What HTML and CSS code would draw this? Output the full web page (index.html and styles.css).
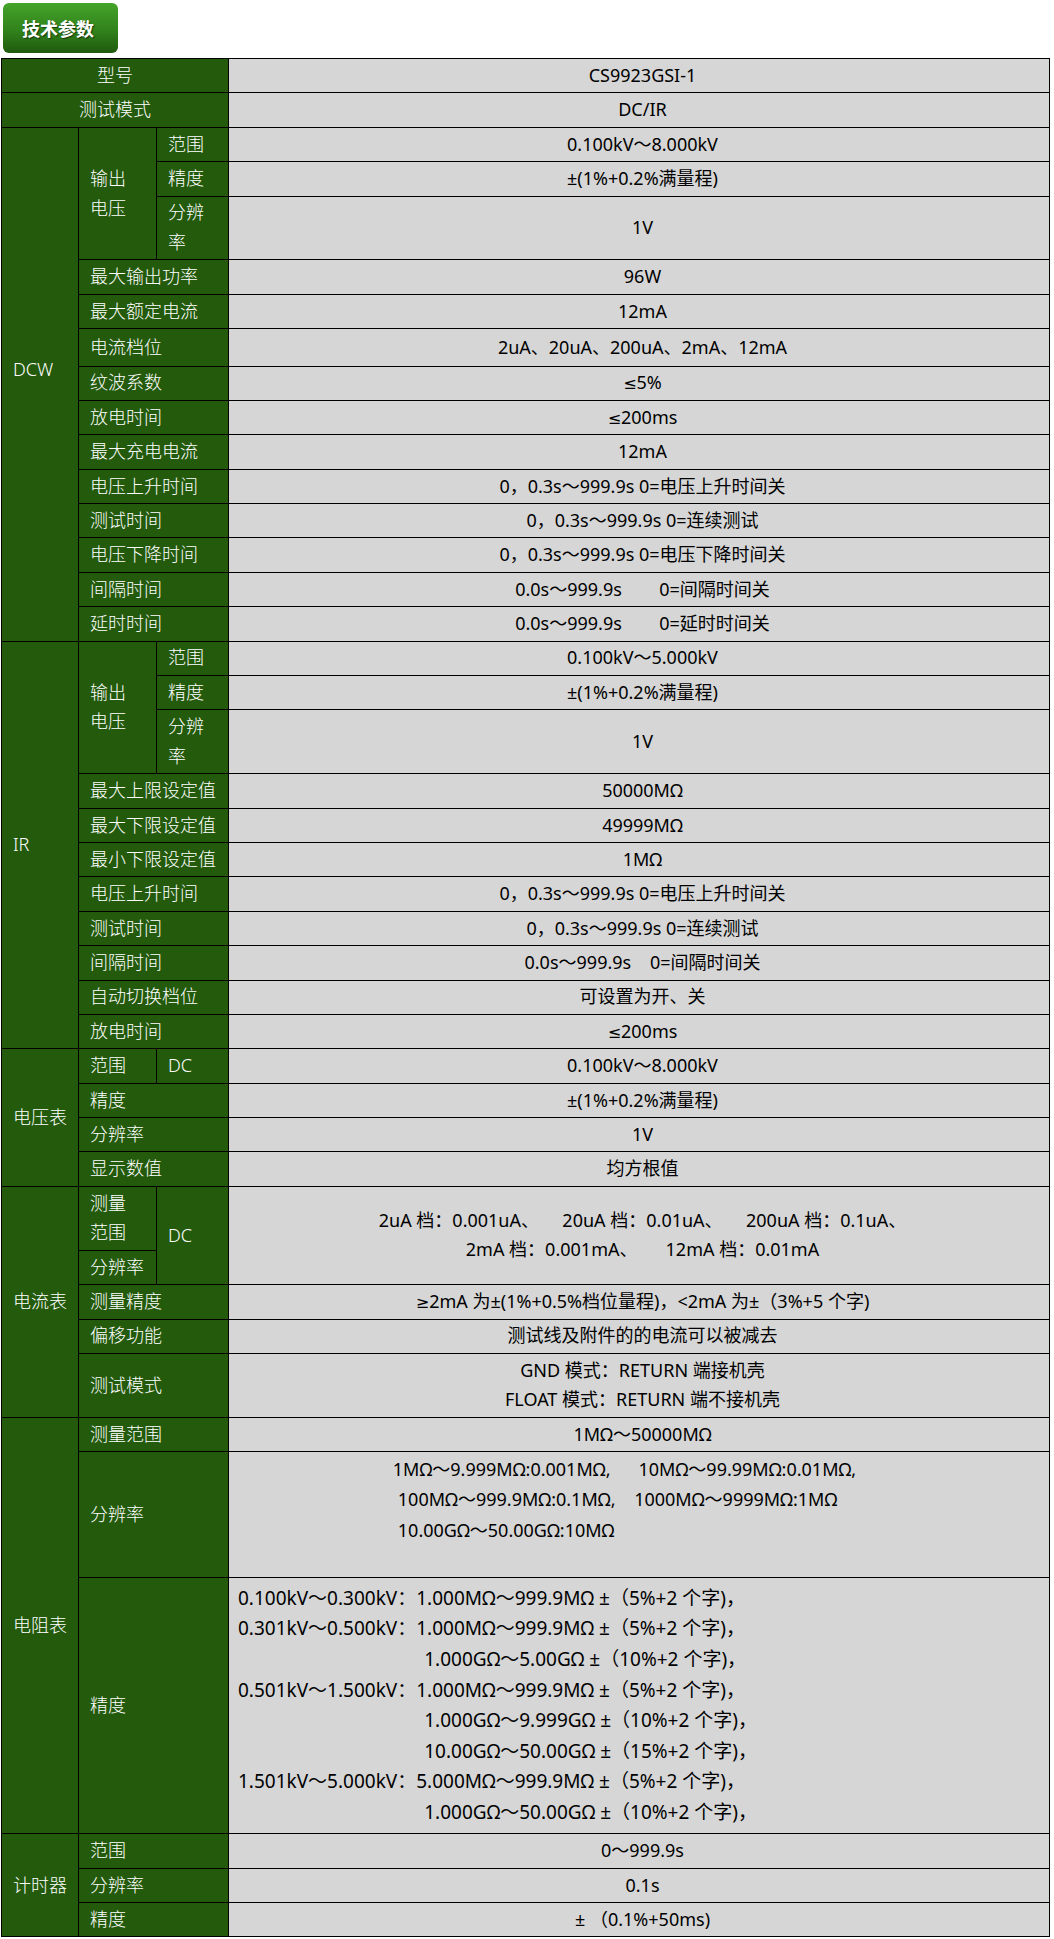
FILE: index.html
```html
<!DOCTYPE html>
<html lang="zh-CN">
<head>
<meta charset="utf-8">
<title>技术参数</title>
<link rel="stylesheet" href="styles.css">
</head>
<body>
<div class="page">
  <div class="title-btn">技术参数</div>
  <table class="spec">
    <colgroup><col class="c1"><col class="c2"><col class="c3"><col class="cv"></colgroup>
    <tr><th colspan="3" class="center">型号</th><td>CS9923GSI-1</td></tr>
    <tr><th colspan="3" class="center">测试模式</th><td>DC/IR</td></tr>

    <tr><th rowspan="14" class="raise">DCW</th><th rowspan="3">输出<br>电压</th><th>范围</th><td>0.100kV～8.000kV</td></tr>
    <tr><th>精度</th><td>±(1%+0.2%满量程)</td></tr>
    <tr><th>分辨<br>率</th><td>1V</td></tr>
    <tr><th colspan="2">最大输出功率</th><td>96W</td></tr>
    <tr><th colspan="2">最大额定电流</th><td>12mA</td></tr>
    <tr><th colspan="2" class="tall">电流档位</th><td>2uA、20uA、200uA、2mA、12mA</td></tr>
    <tr><th colspan="2">纹波系数</th><td><span class="sym">≤</span>5%</td></tr>
    <tr><th colspan="2">放电时间</th><td><span class="sym">≤</span>200ms</td></tr>
    <tr><th colspan="2">最大充电电流</th><td>12mA</td></tr>
    <tr><th colspan="2">电压上升时间</th><td>0，0.3s～999.9s 0=电压上升时间关</td></tr>
    <tr><th colspan="2">测试时间</th><td>0，0.3s～999.9s 0=连续测试</td></tr>
    <tr><th colspan="2">电压下降时间</th><td>0，0.3s～999.9s 0=电压下降时间关</td></tr>
    <tr><th colspan="2">间隔时间</th><td>0.0s～999.9s&nbsp;&nbsp;&nbsp;&nbsp;&nbsp;&nbsp;&nbsp;&nbsp;0=间隔时间关</td></tr>
    <tr><th colspan="2">延时时间</th><td>0.0s～999.9s&nbsp;&nbsp;&nbsp;&nbsp;&nbsp;&nbsp;&nbsp;&nbsp;0=延时时间关</td></tr>

    <tr><th rowspan="11">IR</th><th rowspan="3">输出<br>电压</th><th>范围</th><td>0.100kV～5.000kV</td></tr>
    <tr><th>精度</th><td>±(1%+0.2%满量程)</td></tr>
    <tr><th>分辨<br>率</th><td>1V</td></tr>
    <tr><th colspan="2">最大上限设定值</th><td>50000MΩ</td></tr>
    <tr><th colspan="2">最大下限设定值</th><td>49999MΩ</td></tr>
    <tr><th colspan="2">最小下限设定值</th><td>1MΩ</td></tr>
    <tr><th colspan="2">电压上升时间</th><td>0，0.3s～999.9s 0=电压上升时间关</td></tr>
    <tr><th colspan="2">测试时间</th><td>0，0.3s～999.9s 0=连续测试</td></tr>
    <tr><th colspan="2">间隔时间</th><td>0.0s～999.9s&nbsp;&nbsp;&nbsp;&nbsp;0=间隔时间关</td></tr>
    <tr><th colspan="2">自动切换档位</th><td>可设置为开、关</td></tr>
    <tr><th colspan="2">放电时间</th><td><span class="sym">≤</span>200ms</td></tr>

    <tr><th rowspan="4">电压表</th><th>范围</th><th>DC</th><td>0.100kV～8.000kV</td></tr>
    <tr><th colspan="2">精度</th><td>±(1%+0.2%满量程)</td></tr>
    <tr><th colspan="2">分辨率</th><td>1V</td></tr>
    <tr><th colspan="2">显示数值</th><td>均方根值</td></tr>

    <tr><th rowspan="5">电流表</th><th>测量<br>范围</th><th rowspan="2">DC</th><td rowspan="2">2uA 档：0.001uA、&nbsp;&nbsp;&nbsp;&nbsp;&nbsp;20uA 档：0.01uA、&nbsp;&nbsp;&nbsp;&nbsp;&nbsp;200uA 档：0.1uA、<br>2mA 档：0.001mA、&nbsp;&nbsp;&nbsp;&nbsp;&nbsp;&nbsp;12mA 档：0.01mA</td></tr>
    <tr><th>分辨率</th></tr>
    <tr><th colspan="2">测量精度</th><td><span class="sym">≥</span>2mA 为±(1%+0.5%档位量程)，&lt;2mA 为±（3%+5 个字)</td></tr>
    <tr><th colspan="2">偏移功能</th><td>测试线及附件的的电流可以被减去</td></tr>
    <tr><th colspan="2">测试模式</th><td>GND 模式：RETURN 端接机壳<br>FLOAT 模式：RETURN 端不接机壳</td></tr>

    <tr><th rowspan="3">电阻表</th><th colspan="2">测量范围</th><td>1MΩ～50000MΩ</td></tr>
    <tr><th colspan="2">分辨率</th><td class="res">
      <div class="res-block">
        <div>1MΩ～9.999MΩ:0.001MΩ,&nbsp;&nbsp;&nbsp;&nbsp;&nbsp;&nbsp;10MΩ～99.99MΩ:0.01MΩ,</div>
        <div class="res-sub">100MΩ～999.9MΩ:0.1MΩ,&nbsp;&nbsp;&nbsp;&nbsp;1000MΩ～9999MΩ:1MΩ</div>
        <div class="res-sub">10.00GΩ～50.00GΩ:10MΩ</div>
        <div class="blank">&nbsp;</div>
      </div>
    </td></tr>
    <tr><th colspan="2">精度</th><td class="acc">
      <div class="acc-grid">
        <span>0.100kV～0.300kV：</span><span>1.000MΩ～999.9MΩ ±（5%+2 个字)，</span>
        <span>0.301kV～0.500kV：</span><span>1.000MΩ～999.9MΩ ±（5%+2 个字)，</span>
        <span></span><span class="cont">1.000GΩ～5.00GΩ ±（10%+2 个字)，</span>
        <span>0.501kV～1.500kV：</span><span>1.000MΩ～999.9MΩ ±（5%+2 个字)，</span>
        <span></span><span class="cont">1.000GΩ～9.999GΩ ±（10%+2 个字)，</span>
        <span></span><span class="cont">10.00GΩ～50.00GΩ ±（15%+2 个字)，</span>
        <span>1.501kV～5.000kV：</span><span>5.000MΩ～999.9MΩ ±（5%+2 个字)，</span>
        <span></span><span class="cont">1.000GΩ～50.00GΩ ±（10%+2 个字)，</span>
      </div>
    </td></tr>

    <tr><th rowspan="3">计时器</th><th colspan="2">范围</th><td>0～999.9s</td></tr>
    <tr><th colspan="2">分辨率</th><td>0.1s</td></tr>
    <tr><th colspan="2">精度</th><td>±&nbsp;（0.1%+50ms)</td></tr>
  </table>
</div>
</body>
</html>
```

FILE: styles.css
```css
html, body {
  margin: 0;
  padding: 0;
  background: #ffffff;
}

body {
  font-family: "Noto Sans", "Noto Sans CJK SC", sans-serif;
}

.page {
  padding: 3px 4px 0 1px;
}

.title-btn {
  margin-left: 2px;
  width: 115px;
  height: 50px;
  border-radius: 6px;
  background: linear-gradient(#44a329 0%, #31821b 55%, #1f5a0e 100%);
  color: #ffffff;
  font-family: "Noto Sans CJK SC", sans-serif;
  font-weight: bold;
  font-size: 18px;
  display: flex;
  align-items: center;
  justify-content: center;
  padding-right: 5px;
  box-sizing: border-box;
  text-shadow: 1px 1px 1px rgba(0, 0, 0, 0.55);
}

.spec {
  margin-top: 5px;
  border-collapse: collapse;
  table-layout: fixed;
  width: 1049px;
  font-size: 18px;
  line-height: 29.6px;
}

.c1 { width: 77px; }
.c2 { width: 78px; }
.c3 { width: 72px; }

.spec th,
.spec td {
  border: 1px solid #000000;
  padding: 1.9px 4px 1.9px 11px;
}

.spec th {
  background: #235a0c;
  color: #ffffff;
  font-weight: 300;
  text-align: left;
}

.spec th.center {
  text-align: center;
  padding-left: 4px;
}

.spec th.raise {
  padding-bottom: 31px;
}

.spec th.tall {
  padding-top: 3.4px;
  padding-bottom: 3.4px;
}

.spec td {
  background: #d6d6d6;
  color: #000000;
  text-align: center;
}

.sym {
  font-family: "DejaVu Sans", sans-serif;
  font-size: 16px;
  line-height: 1;
}

.spec td.res {
  vertical-align: top;
  line-height: 30.2px;
}

.res-block {
  display: inline-block;
  text-align: left;
  margin-right: 36px;
}

.res-sub {
  padding-left: 5px;
}

.spec td.acc {
  text-align: left;
  padding: 5px 8px 6px 9px;
  font-size: 19px;
  line-height: 30.57px;
}

.acc-grid {
  display: grid;
  grid-template-columns: max-content 1fr;
}

.acc-grid .cont {
  padding-left: 8px;
}
```
